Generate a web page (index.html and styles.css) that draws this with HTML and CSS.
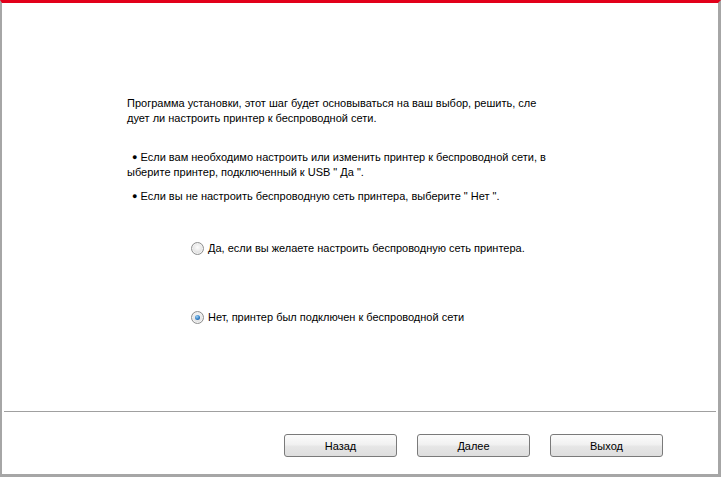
FILE: index.html
```html
<!DOCTYPE html>
<html lang="ru">
<head>
<meta charset="utf-8">
<title>Установка</title>
<link rel="stylesheet" href="styles.css">
</head>
<body>
<div class="window">
  <div class="content">
    <div class="intro">
      <span class="line">Программа установки, этот шаг будет основываться на ваш выбор, решить, сле</span>
      <span class="line">дует ли настроить принтер к беспроводной сети.</span>
    </div>
    <div class="bullet b1">
      <span class="line"><span class="dot">●</span> Если вам необходимо настроить или изменить принтер к беспроводной сети, в</span>
      <span class="line">ыберите принтер, подключенный к USB " Да ".</span>
    </div>
    <div class="bullet b2">
      <span class="line"><span class="dot">●</span> Если вы не настроить беспроводную сеть принтера, выберите " Нет ".</span>
    </div>
    <label class="radio r1"><span class="circle"></span><span>Да, если вы желаете настроить беспроводную сеть принтера.</span></label>
    <label class="radio r2"><span class="circle checked"></span><span>Нет, принтер был подключен к беспроводной сети</span></label>
  </div>
  <div class="separator"></div>
  <div class="footer">
    <button class="btn">Назад</button>
    <button class="btn">Далее</button>
    <button class="btn">Выход</button>
  </div>
</div>
</body>
</html>
```
FILE: styles.css
```css
html, body {
  margin: 0;
  padding: 0;
  background: #fff;
}
.window {
  width: 716px;
  height: 471px;
  border-top: 3px solid #e2001a;
  border-left: 2px solid #a6a6a6;
  border-right: 3px solid #a6a6a6;
  border-bottom: 3px solid #a6a6a6;
  display: flex;
  flex-direction: column;
  font-family: "Liberation Sans", Arial, sans-serif;
  font-size: 11px;
  color: #000;
}
.content {
  flex: 1;
  padding: 93px 0 0 125px;
  display: flex;
  flex-direction: column;
  align-items: flex-start;
}
.line {
  display: block;
  white-space: nowrap;
  line-height: 15px;
}
.bullet { margin-top: 24px; }
.bullet.b2 { margin-top: 9px; }
.bullet .line:first-child { padding-left: 5px; }
.dot { font-size: 9px; vertical-align: 1px; }
.radio {
  display: flex;
  align-items: center;
  gap: 4px;
  margin-left: 64px;
  line-height: 15px;
}
.r1 { margin-top: 37px; }
.r2 { margin-top: 54px; }
.circle {
  width: 11px;
  height: 11px;
  border-radius: 50%;
  border: 1px solid #8e8f8f;
  background: radial-gradient(circle at 50% 40%, #fdfdfd 0%, #e2e2e2 60%, #cfcfcf 100%);
  box-shadow: inset 0 0 0 1px #f3f3f3;
  position: relative;
}
.circle.checked::after {
  content: "";
  position: absolute;
  left: 3px;
  top: 3px;
  width: 5px;
  height: 5px;
  border-radius: 50%;
  background: radial-gradient(circle at 40% 35%, #9fd2f5 0%, #2b78c0 60%, #1b4f8a 100%);
}
.separator {
  height: 1px;
  background: #a0a0a0;
  margin: 0 2px 0 2px;
}
.footer {
  height: 62px;
  display: flex;
  justify-content: flex-end;
  align-items: flex-start;
  gap: 20px;
  padding: 22px 55px 0 0;
  box-sizing: border-box;
}
.btn {
  width: 113px;
  height: 23px;
  border: 1px solid #7a7a7a;
  border-radius: 3px;
  background: linear-gradient(#fbfbfb 0%, #f1f1f1 45%, #e6e6e6 55%, #dedede 100%);
  font-family: "Liberation Sans", Arial, sans-serif;
  font-size: 11px;
  color: #000;
  padding: 0;
}
```
